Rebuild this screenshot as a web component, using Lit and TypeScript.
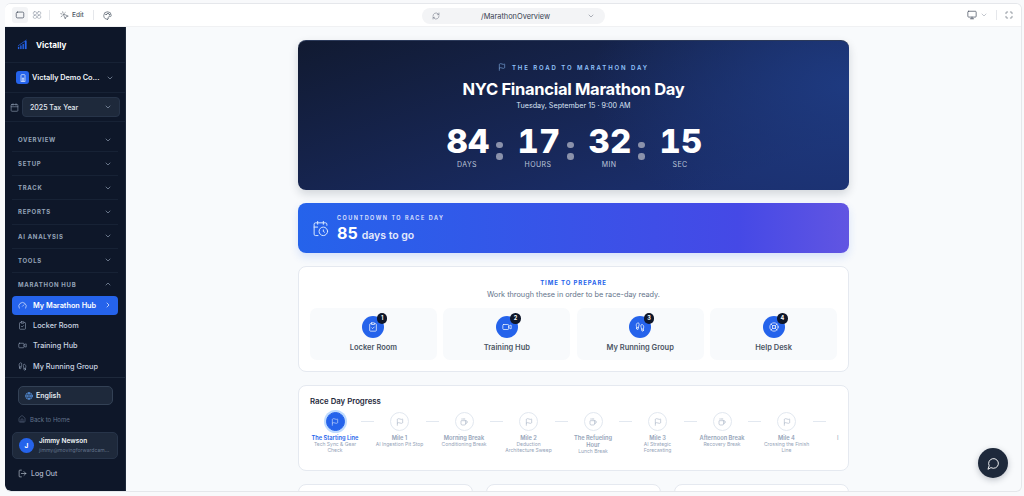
import { LitElement, html, css, svg } from "lit";
import { customElement } from "lit/decorators.js";

const ic = (body: unknown, cls = "") => html`<svg class="ic ${cls}" viewBox="0 0 24 24" fill="none" stroke="currentColor" stroke-width="2" stroke-linecap="round" stroke-linejoin="round">${body}</svg>`;
const chevD = svg`<path d="m6 9 6 6 6-6"/>`;
const chevU = svg`<path d="m18 15-6-6-6 6"/>`;
const chevR = svg`<path d="m9 18 6-6-6-6"/>`;
const flag = svg`<path d="M4 22V4a1 1 0 0 1 .4-.8A6 6 0 0 1 8 2c3 0 5 2 7.333 2q2 0 3.067-.8A1 1 0 0 1 20 4v10a1 1 0 0 1-.4.8A6 6 0 0 1 16 16c-3 0-5-2-8-2a6 6 0 0 0-4 1.528"/>`;
const coffee = svg`<path d="M10 2v2M14 2v2M16 8a1 1 0 0 1 1 1v8a4 4 0 0 1-4 4H7a4 4 0 0 1-4-4V9a1 1 0 0 1 1-1h14a4 4 0 1 1 0 8h-1M6 2v2"/>`;
const clipboard = svg`<rect x="8" y="2" width="8" height="4" rx="1"/><path d="M16 4h2a2 2 0 0 1 2 2v14a2 2 0 0 1-2 2H6a2 2 0 0 1-2-2V6a2 2 0 0 1 2-2h2"/><path d="m9 14 2 2 4-4"/>`;
const video = svg`<path d="m16 13 5.223 3.482a.5.5 0 0 0 .777-.416V7.87a.5.5 0 0 0-.752-.432L16 10.5"/><rect x="2" y="6" width="14" height="12" rx="2"/>`;
const feet = svg`<path d="M4 16v-2.38C4 11.5 2.97 10.5 3 8c.03-2.72 1.49-6 4.5-6C9.37 2 10 3.8 10 5.5c0 3.11-2 5.66-2 8.68V16a2 2 0 1 1-4 0Z"/><path d="M20 20v-2.38c0-2.12 1.03-3.12 1-5.62-.03-2.72-1.49-6-4.5-6C14.63 6 14 7.8 14 9.5c0 3.11 2 5.66 2 8.68V20a2 2 0 1 0 4 0Z"/><path d="M16 17h4M4 13h4"/>`;
const buoy = svg`<circle cx="12" cy="12" r="10"/><circle cx="12" cy="12" r="4"/><path d="m4.93 4.93 4.24 4.24M14.83 9.17l4.24-4.24M14.83 14.83l4.24 4.24M9.17 14.83l-4.24 4.24"/>`;

const navSections = ["OVERVIEW", "SETUP", "TRACK", "REPORTS", "AI ANALYSIS", "TOOLS"];
const steps = [
  { t: "The Starting Line", s: "Tech Sync & Gear Check", i: flag, on: true },
  { t: "Mile 1", s: "AI Ingestion Pit Stop", i: flag },
  { t: "Morning Break", s: "Conditioning Break", i: coffee },
  { t: "Mile 2", s: "Deduction Architecture Sweep", i: flag },
  { t: "The Refueling Hour", s: "Lunch Break", i: coffee },
  { t: "Mile 3", s: "AI Strategic Forecasting", i: flag },
  { t: "Afternoon Break", s: "Recovery Break", i: coffee },
  { t: "Mile 4", s: "Crossing the Finish Line", i: flag },
];
const prep = [
  { n: 1, t: "Locker Room", i: clipboard },
  { n: 2, t: "Training Hub", i: video },
  { n: 3, t: "My Running Group", i: feet },
  { n: 4, t: "Help Desk", i: buoy },
];
const count = [["84", "DAYS"], ["17", "HOURS"], ["32", "MIN"], ["15", "SEC"]];

@customElement("app-root")
export class AppRoot extends LitElement {
  static styles = css`
    :host { display: block; width: 1024px; height: 496px; background: #f8f9fb; font-family: Inter, "Liberation Sans", sans-serif; overflow: hidden; position: relative; }
    * { box-sizing: border-box; }
    .ic { display: block; flex: none; width: 12px; height: 12px; }
    .frame { margin: 3px 0 0 5px; width: 1017px; height: 489px; border: 1px solid #e5e7eb; border-left: 0; border-radius: 6px; background: #f8fafc; display: flex; flex-direction: column; overflow: hidden; }
    .toolbar { height: 23px; flex: none; background: #fff; border-bottom: 1px solid #f0f1f3; display: flex; align-items: center; color: #4b5563; position: relative; padding-left: 7px; }
    .tb-btn { width: 16px; height: 16px; border-radius: 3px; display: flex; align-items: center; justify-content: center; margin-right: 1px; }
    .tb-btn.on { background: #f3f4f6; color: #374151; }
    .tb-btn .ic { width: 10px; height: 10px; stroke-width: 1.6; }
    .muted { color: #9ca3af; }
    .vsep { width: 1px; height: 10px; background: #e5e7eb; margin: 0 9px; }
    .vsep.first { margin: 0 10px 0 3px; }
    .edit { display: flex; align-items: center; gap: 3px; font-size: 6.5px; font-weight: 500; }
    .edit .ic { width: 9px; height: 9px; stroke-width: 1.6; }
    .pal { width: 9px; height: 9px; stroke-width: 1.8; }
    .url { position: absolute; left: 417px; top: 4px; width: 183px; height: 16px; border-radius: 8px; background: #f3f4f6; display: flex; align-items: center; padding: 0 10px; font-size: 7.4px; color: #374151; }
    .url .ic { width: 8px; height: 8px; stroke-width: 1.6; color: #6b7280; }
    .url span { flex: 1; text-align: center; padding-left: 4px; }
    .tb-right { margin-left: auto; display: flex; align-items: center; padding-right: 8px; }
    .tb-right .ic { width: 8px; height: 8px; stroke-width: 1.8; }
    .tb-right .lg { width: 10px; height: 10px; margin-right: 3px; }
    .tb-right .vsep { margin: 0 8px; }

    .body { flex: 1; min-height: 0; display: flex; }
    .side { width: 121px; flex: none; color: #cbd5e1; display: flex; flex-direction: column; border-right: 1px solid #1e293b; border-bottom-left-radius: 6px; overflow: hidden; background: #0e1729; }
    .brand { height: 36px; flex: none; display: flex; align-items: center; gap: 8px; padding-left: 12px; border-bottom: 1px solid #172235; color: #fff; font-weight: 700; font-size: 8.2px; }
    .brand svg { width: 11px; height: 11px; }
    .co { height: 30px; flex: none; display: flex; align-items: center; padding: 0 11px 0 11px; border-bottom: 1px solid #172235; color: #f1f5f9; font-size: 7.3px; font-weight: 600; gap: 3px; }
    .co-logo { width: 13px; height: 13px; border-radius: 3px; background: #2563eb; color: #fff; display: flex; align-items: center; justify-content: center; flex: none; }
    .co-logo .ic { width: 8px; height: 8px; }
    .co span { flex: 1; white-space: nowrap; }
    .co > .ic { width: 8px; height: 8px; color: #94a3b8; }
    .tax { height: 29px; flex: none; display: flex; align-items: center; padding: 0 5px; gap: 3px; border-bottom: 1px solid #172235; color: #94a3b8; }
    .tax > .ic { width: 9px; height: 9px; stroke-width: 1.6; }
    .sel { flex: 1; height: 20px; border-radius: 4px; background: #1e293b; border: 1px solid #273449; display: flex; align-items: center; justify-content: space-between; padding: 0 7px; color: #e2e8f0; font-size: 7px; font-weight: 500; }
    .sel .ic { width: 8px; height: 8px; color: #94a3b8; }
    .nav { padding: 6px 7px 0; flex: 1; display: flex; flex-direction: column; }
    .sec { height: 24.15px; flex: none; display: flex; align-items: center; justify-content: space-between; padding: 0 6px; border-bottom: 1px solid #172235; font-size: 6px; font-weight: 700; letter-spacing: .7px; color: #94a3b8; }
    .sec.open { border: 0; height: 23px; }
    .sec .ic { width: 8px; height: 8px; stroke-width: 2; }
    .item { display: flex; align-items: center; height: 20.4px; padding: 0 6px; gap: 6px; font-size: 7.3px; font-weight: 500; color: #cbd5e1; flex: none; }
    .item > .ic:first-child { width: 9px; height: 9px; stroke-width: 1.6; color: #94a3b8; }
    .item.on { height: 19px; margin-bottom: .5px; background: #2563eb; color: #fff; border-radius: 4px; font-weight: 600; }
    .item.on > .ic { color: #fff !important; }
    .item .end { margin-left: auto; width: 8px; height: 8px; }
    .foot { flex: none; border-top: 1px solid #1e293b; padding: 8px 7px 0; height: 114px; display: flex; flex-direction: column; }
    .lang { margin: 0 6px; width: 95px; height: 19px; border-radius: 5px; background: #1e293b; border: 1px solid #334155; display: flex; align-items: center; gap: 3px; padding: 0 6px; color: #e2e8f0; font-size: 7px; font-weight: 600; flex: none; }
    .lang .ic { width: 8px; height: 8px; color: #60a5fa; }
    .back { height: 27px; flex: none; display: flex; align-items: center; gap: 4px; padding: 1px 0 0 6px; color: #64748b; font-size: 6px; }
    .back .ic { width: 8px; height: 8px; stroke-width: 1.6; }
    .user { height: 27px; flex: none; border-radius: 5px; background: #1e293b; border: 1px solid #273449; display: flex; align-items: center; gap: 5px; padding: 0 6px; }
    .av { width: 15px; height: 15px; border-radius: 50%; background: #2563eb; color: #fff; font-size: 6.5px; font-weight: 700; display: flex; align-items: center; justify-content: center; flex: none; }
    .u-t { min-width: 0; }
    .u-n { font-size: 6.5px; font-weight: 600; color: #f1f5f9; line-height: 9px; }
    .u-m { font-size: 5.1px; color: #64748b; line-height: 8px; white-space: nowrap; }
    .logout { flex: 1; display: flex; align-items: center; gap: 4px; padding: 0 0 4px 6px; font-size: 7px; color: #cbd5e1; }
    .logout .ic { width: 9px; height: 9px; stroke-width: 1.6; }

    .main { flex: 1; min-width: 0; overflow: hidden; padding: 13px 172px 0 172px; display: flex; flex-direction: column; gap: 13px; }
    .hero { height: 150px; flex: none; border-radius: 8px; color: #fff; display: flex; flex-direction: column; align-items: center; box-shadow: 0 4px 10px rgba(15,23,42,.16); border-top: 1px solid #2c3a5a;
      background: radial-gradient(ellipse 260px 150px at 100% 30%, #1e3a80 0%, rgba(30,58,128,0) 100%), linear-gradient(160deg, #111a31 0%, #1b2f6e 85%); padding-top: 21px; }
    .eyebrow { display: flex; align-items: center; gap: 6px; font-size: 6px; font-weight: 600; letter-spacing: 1.92px; color: #93c5fd; height: 10px; }
    .eyebrow .ic { width: 8px; height: 8px; stroke-width: 1.6; }
    .h1 { font-size: 16.55px; font-weight: 700; letter-spacing: -.3px; line-height: 20px; margin-top: 7px; }
    .date { font-size: 7.2px; color: #dbe4f5; line-height: 10px; margin-top: 2px; }
    .cd { display: flex; align-items: flex-start; margin-top: 13px; }
    .cd-u { width: 47px; display: flex; flex-direction: column; align-items: center; }
    .cd-n { font-size: 33px; font-weight: 800; line-height: 34px; letter-spacing: .3px; padding-left: 2px; font-variant-numeric: tabular-nums; white-space: nowrap; }
    .cd-l { font-size: 7px; color: #bcc6d9; letter-spacing: .4px; line-height: 9px; margin-top: 1.5px; }
    .dots { width: 24px; display: flex; flex-direction: column; gap: 5.2px; align-items: center; padding-top: 17.5px; margin: 0 3px 0 -3px; }
    .dots i { width: 6.5px; height: 6.5px; border-radius: 50%; background: #8b92ab; }
    .banner { height: 50px; flex: none; border-radius: 8px; background: linear-gradient(90deg, #2563eb 0%, #4549e6 80%, #6155e2 100%); box-shadow: 0 4px 8px rgba(37,99,235,.16); color: #fff; display: flex; align-items: center; gap: 9px; padding-left: 14px; }
    .banner > .ic { width: 17px; height: 17px; stroke-width: 1.4; color: #dbeafe; }
    .b-txt { padding-top: 3px; margin-left: -1px; }
    .b-t { font-size: 5.5px; font-weight: 600; letter-spacing: 1.5px; color: #e0e7ff; line-height: 8px; }
    .b-n { display: flex; align-items: baseline; gap: 4px; line-height: 20px; margin-top: 1px; }
    .b-n b { font-size: 16px; font-weight: 700; }
    .b-n span { font-size: 10.5px; font-weight: 600; color: #e4e9fb; }
    .card { background: #fff; border: 1px solid #e5e9f0; border-radius: 8px; flex: none; }
    .prep { height: 106px; padding: 11px 11px 0; display: flex; flex-direction: column; align-items: center; }
    .p-k { font-size: 6px; font-weight: 700; letter-spacing: .9px; color: #2563eb; line-height: 9px; }
    .p-s { font-size: 7.3px; color: #64748b; line-height: 11px; margin-top: 2px; }
    .p-g { width: 100%; display: grid; grid-template-columns: repeat(4, 1fr); gap: 6.5px; margin-top: 8px; }
    .p-c { height: 52px; background: #f8fafc; border-radius: 7px; display: flex; flex-direction: column; align-items: center; padding-top: 8px; font-size: 7.5px; font-weight: 600; color: #4b5563; }
    .p-i { width: 22px; height: 22px; border-radius: 50%; background: #2563eb; color: #fff; display: flex; align-items: center; justify-content: center; position: relative; margin-bottom: 5px; }
    .p-i .ic { width: 10px; height: 10px; stroke-width: 1.7; }
    .badge { position: absolute; top: -3px; right: -3px; width: 10.5px; height: 10.5px; border-radius: 50%; background: #0f172a; color: #fff; font-size: 5.5px; font-weight: 700; display: flex; align-items: center; justify-content: center; }
    .prog { height: 86px; padding: 10px 0 0 11px; overflow: hidden; }
    .pr-t { font-size: 7.8px; font-weight: 600; color: #1e293b; line-height: 11px; }
    .tl { display: flex; width: 560px; margin-top: 5px; }
    .st { width: 50px; flex: none; display: flex; flex-direction: column; align-items: center; text-align: center; }
    .node { width: 19px; height: 19px; border-radius: 50%; border: 1px solid #e2e8f0; color: #94a3b8; display: flex; align-items: center; justify-content: center; background: #fff; flex: none; }
    .node .ic { width: 8px; height: 8px; stroke-width: 1.5; }
    .st.on .node { background: #2563eb; border-color: #2563eb; color: #fff; box-shadow: 0 0 0 2px #bfdbfe; }
    .st-t { font-size: 5.7px; font-weight: 600; color: #94a3b8; line-height: 7px; margin-top: 3px; max-width: 48px; }
    .st.on .st-t { color: #2563eb; }
    .st-s { font-size: 5px; color: #94a3b8; line-height: 6px; margin-top: .3px; }
    .ln { width: 13px; height: 1px; background: #e2e8f0; flex: none; margin: 9px .5px 0 1px; }
    .tail { font-size: 5.7px; line-height: 7px; color: #94a3b8; margin: 22px 0 0 11px; flex: none; }
    .row { display: grid; grid-template-columns: repeat(3, 1fr); gap: 13px; }
    .row .card { height: 40px; }
    .chat { position: absolute; left: 978px; top: 448px; width: 30px; height: 30px; border-radius: 50%; background: #1e293b; color: #fff; display: flex; align-items: center; justify-content: center; box-shadow: 0 2px 6px rgba(15,23,42,.25); }
    .chat .ic { width: 13px; height: 13px; stroke-width: 1.7; }
  `;

  render() {
    return html`
      <div class="frame">
        <div class="toolbar">
          <div class="tb-btn on">${ic(svg`<rect x="3" y="5" width="18" height="14" rx="3"/>`)}</div>
          <div class="tb-btn muted">${ic(svg`<rect x="3" y="4" width="8" height="7" rx="3"/><rect x="13" y="4" width="8" height="7" rx="3"/><rect x="3" y="13" width="8" height="7" rx="3"/><rect x="13" y="13" width="8" height="7" rx="3"/>`)}</div>
          <div class="vsep first"></div>
          <div class="edit">${ic(svg`<path d="M14 4.1 12 6M5.1 8l-2.9-.8M6 12.9 3.1 15M7.2 2.2 8 5.1M9 9l5 12 1.8-5.2L21 14Z"/>`)}<span>Edit</span></div>
          <div class="vsep"></div>
          ${ic(svg`<path d="M12 22a10 10 0 1 1 10-10c0 2.5-2 3-4 3h-2a2 2 0 0 0-1.5 3.3c.5.6.5 3.7-2.5 3.7Z"/><circle cx="8" cy="9" r="1"/><circle cx="13" cy="6.5" r="1"/><circle cx="17" cy="10" r="1"/>`, "pal")}
          <div class="url">
            ${ic(svg`<path d="M3 12a9 9 0 0 1 15-6.7L21 8M21 3v5h-5M21 12a9 9 0 0 1-15 6.7L3 16M8 16H3v5"/>`)}
            <span>/MarathonOverview</span>
            ${ic(chevD)}
          </div>
          <div class="tb-right">
            ${ic(svg`<rect x="2" y="3" width="20" height="14" rx="2"/><path d="M12 17v4M8 21h8"/>`, "lg")}
            ${ic(chevD, "muted")}
            <div class="vsep"></div>
            ${ic(svg`<path d="M8 3H5a2 2 0 0 0-2 2v3M21 8V5a2 2 0 0 0-2-2h-3M3 16v3a2 2 0 0 0 2 2h3M16 21h3a2 2 0 0 0 2-2v-3"/>`)}
          </div>
        </div>
        <div class="body">
          <aside class="side">
            <div class="brand">
              <svg viewBox="0 0 24 24" fill="#2563eb"><rect x="2" y="17" width="3" height="5"/><rect x="7" y="14" width="3" height="8"/><rect x="12" y="11" width="3" height="11"/><rect x="17" y="4" width="4" height="18"/><path d="M2 15 21 2" stroke="#2563eb" stroke-width="1.5"/></svg>
              <span>Victally</span>
            </div>
            <div class="co">
              <div class="co-logo">${ic(svg`<path d="M6 22V4a2 2 0 0 1 2-2h8a2 2 0 0 1 2 2v18Z"/><path d="M10 22V12h4v10"/>`)}</div>
              <span>Victally Demo Co...</span>
              ${ic(chevD)}
            </div>
            <div class="tax">
              ${ic(svg`<path d="M8 2v4M16 2v4"/><rect x="3" y="4" width="18" height="18" rx="2"/><path d="M3 10h18"/>`)}
              <div class="sel"><span>2025 Tax Year</span>${ic(chevD)}</div>
            </div>
            <div class="nav">
              ${navSections.map((s) => html`<div class="sec"><span>${s}</span>${ic(chevD)}</div>`)}
              <div class="sec open"><span>MARATHON HUB</span>${ic(chevU)}</div>
              <div class="item on">${ic(svg`<path d="m12 14 4-4"/><path d="M3.34 19a10 10 0 1 1 17.32 0"/>`)}<span>My Marathon Hub</span>${ic(chevR, "end")}</div>
              <div class="item">${ic(clipboard)}<span>Locker Room</span></div>
              <div class="item">${ic(video)}<span>Training Hub</span></div>
              <div class="item">${ic(feet)}<span>My Running Group</span></div>
            </div>
            <div class="foot">
              <div class="lang">${ic(svg`<circle cx="12" cy="12" r="10"/><path d="M12 2a14.5 14.5 0 0 0 0 20 14.5 14.5 0 0 0 0-20M2 12h20"/>`)}<span>English</span></div>
              <div class="back">${ic(svg`<path d="M15 21v-8a1 1 0 0 0-1-1h-4a1 1 0 0 0-1 1v8"/><path d="M3 10a2 2 0 0 1 .7-1.5l7-6a2 2 0 0 1 2.6 0l7 6A2 2 0 0 1 21 10v9a2 2 0 0 1-2 2H5a2 2 0 0 1-2-2Z"/>`)}<span>Back to Home</span></div>
              <div class="user">
                <div class="av">J</div>
                <div class="u-t"><div class="u-n">Jimmy Newson</div><div class="u-m">jimmy@movingforwardcam...</div></div>
              </div>
              <div class="logout">${ic(svg`<path d="M9 21H5a2 2 0 0 1-2-2V5a2 2 0 0 1 2-2h4M16 17l5-5-5-5M21 12H9"/>`)}<span>Log Out</span></div>
            </div>
          </aside>
          <main class="main">
            <section class="hero">
              <div class="eyebrow">${ic(flag)}<span>THE ROAD TO MARATHON DAY</span></div>
              <div class="h1">NYC Financial Marathon Day</div>
              <div class="date">Tuesday, September 15 · 9:00 AM</div>
              <div class="cd">
                ${count.map(([n, l], i) => html`
                  ${i ? html`<div class="dots"><i></i><i></i></div>` : ""}
                  <div class="cd-u"><div class="cd-n">${n}</div><div class="cd-l">${l}</div></div>`)}
              </div>
            </section>
            <section class="banner">
              ${ic(svg`<path d="M16 14v2.2l1.6 1M16 2v4M8 2v4M21 7.5V6a2 2 0 0 0-2-2H5a2 2 0 0 0-2 2v14a2 2 0 0 0 2 2h3.5M3 10h5"/><circle cx="16" cy="16" r="6"/>`)}
              <div class="b-txt">
                <div class="b-t">COUNTDOWN TO RACE DAY</div>
                <div class="b-n"><b>85</b><span>days to go</span></div>
              </div>
            </section>
            <section class="card prep">
              <div class="p-k">TIME TO PREPARE</div>
              <div class="p-s">Work through these in order to be race-day ready.</div>
              <div class="p-g">
                ${prep.map((p) => html`<div class="p-c"><div class="p-i">${ic(p.i)}<span class="badge">${p.n}</span></div><span>${p.t}</span></div>`)}
              </div>
            </section>
            <section class="card prog">
              <div class="pr-t">Race Day Progress</div>
              <div class="tl">
                ${steps.map((s) => html`
                  <div class="st ${s.on ? "on" : ""}">
                    <div class="node">${ic(s.i)}</div>
                    <div class="st-t">${s.t}</div>
                    <div class="st-s">${s.s}</div>
                  </div>
                  <div class="ln"></div>`)}
                <div class="tail">I</div>
              </div>
            </section>
            <section class="row"><div class="card"></div><div class="card"></div><div class="card"></div></section>
          </main>
        </div>
      </div>
      <div class="chat">${ic(svg`<path d="M7.9 20A9 9 0 1 0 4 16.1L2 22Z"/>`)}</div>
    `;
  }
}
